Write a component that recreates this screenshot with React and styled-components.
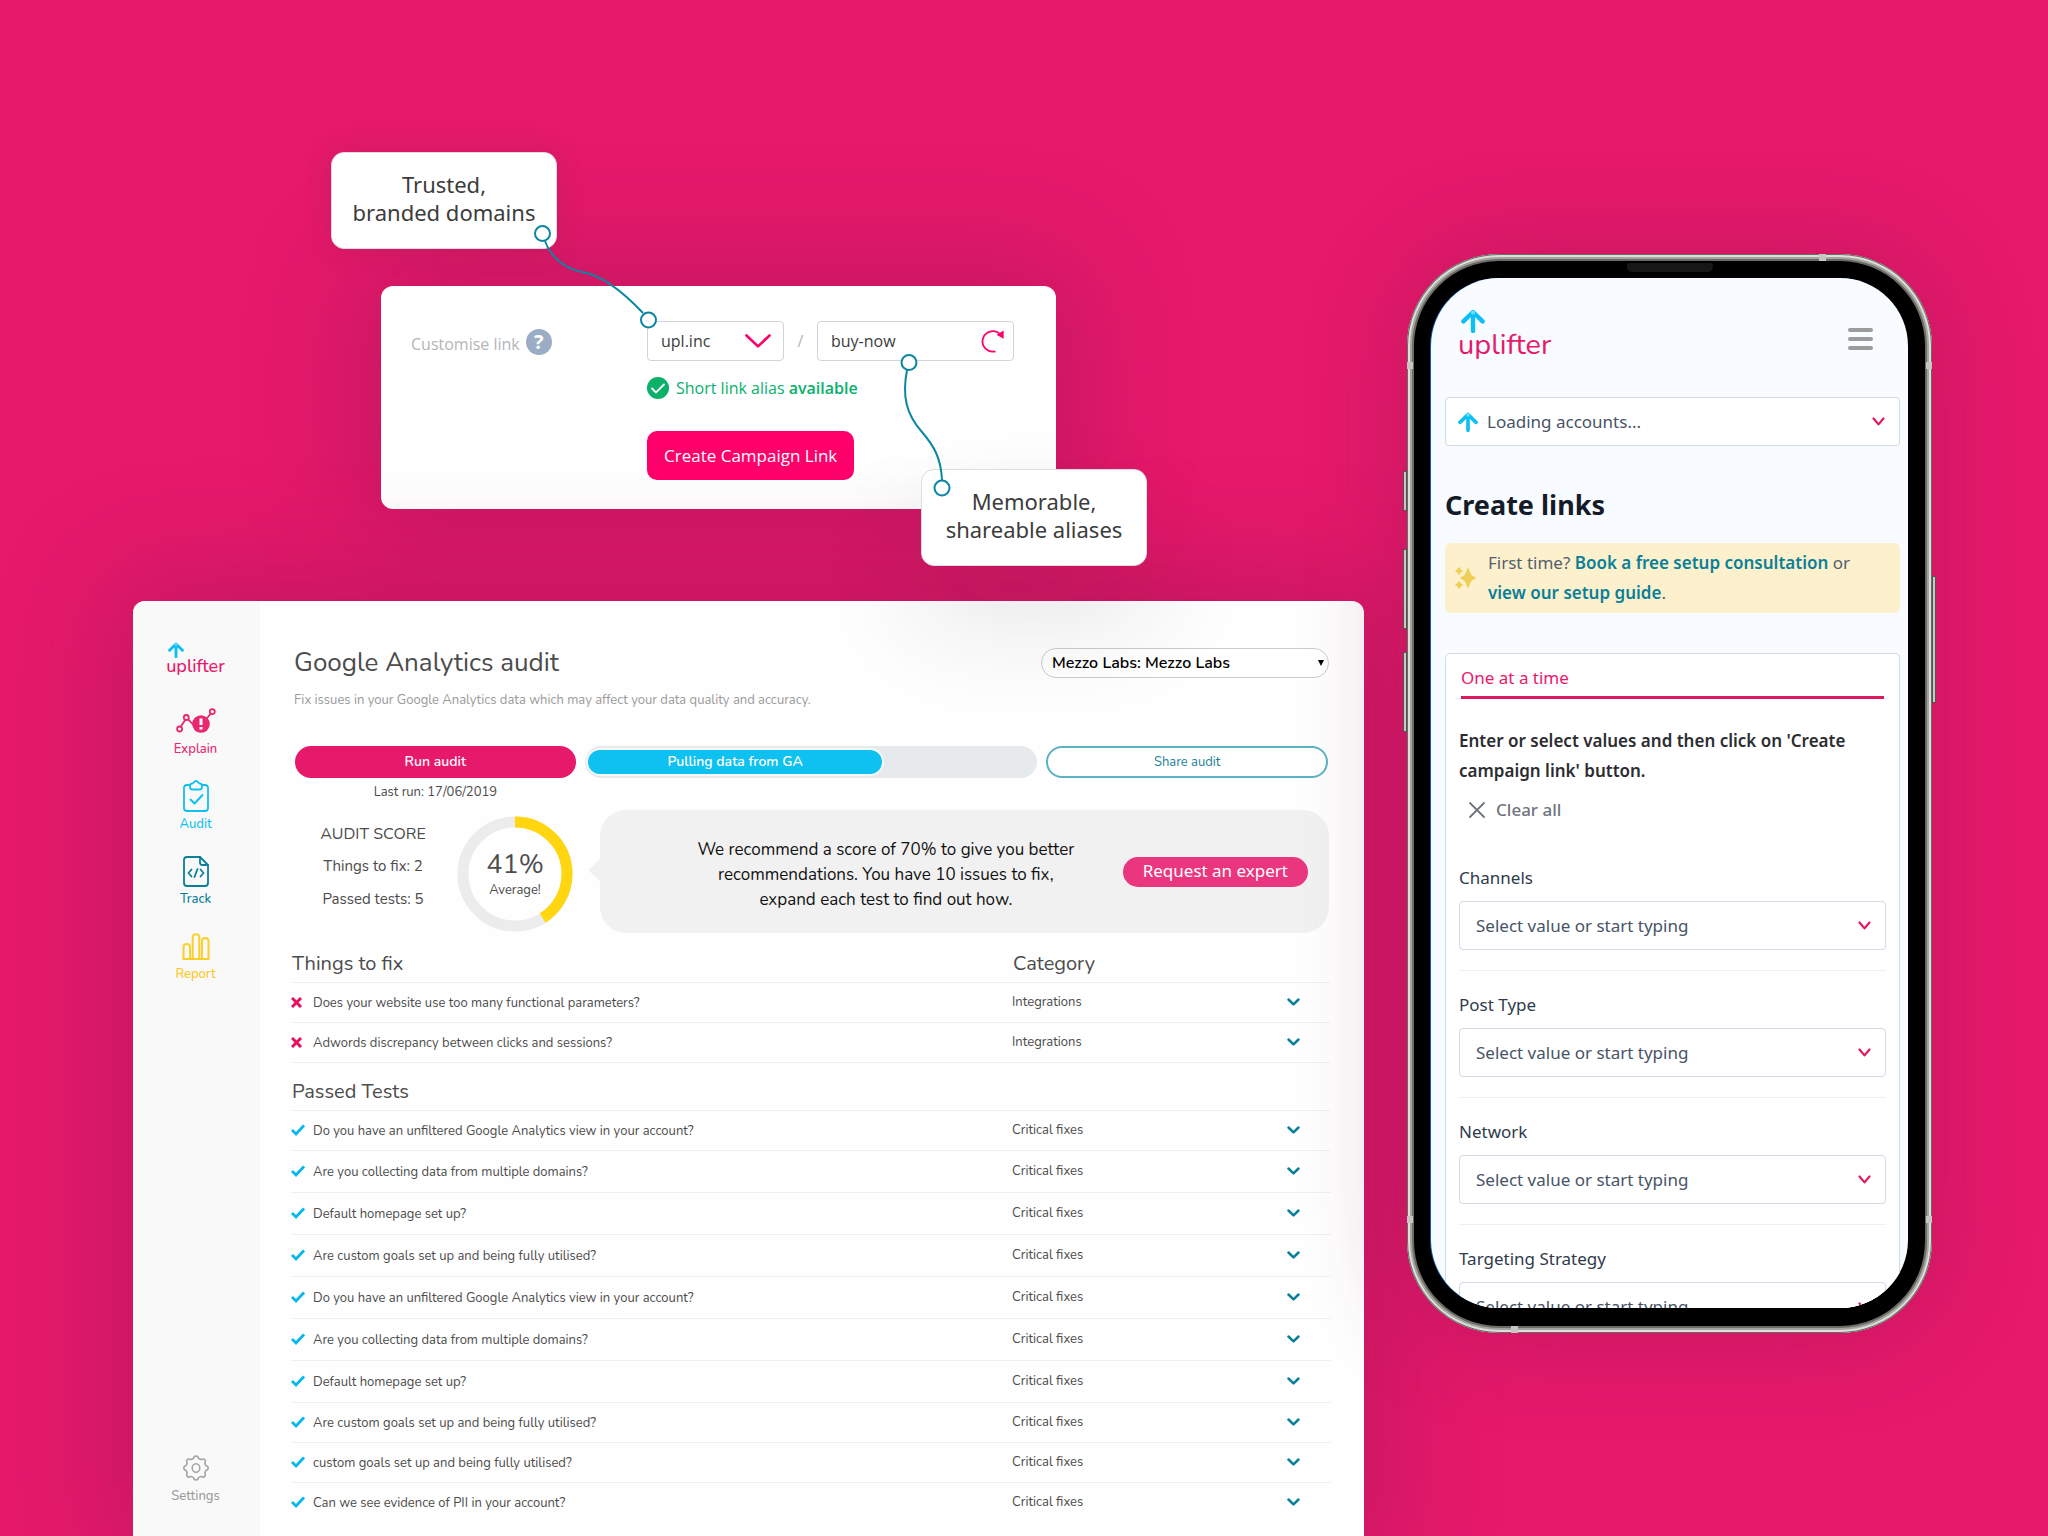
import React from "react";
import styled, { createGlobalStyle } from "styled-components";

const sans = '"Open Sans", "Noto Sans", sans-serif';
const noto = '"Noto Sans", "Open Sans", sans-serif';
const rounded = 'Nunito, Lato, "Open Sans", sans-serif';
const c = {
  pink: "#e6196b",
  hot: "#ff006a",
  cyan: "#0fc1f0",
  teal: "#0a7f98",
  yellow: "#ffd60f",
};

const GlobalStyle = createGlobalStyle`
  *, *::before, *::after { box-sizing: border-box; }
  body { margin: 0; background: ${c.pink}; font-family: ${sans}; }
  button, select, input { font: inherit; margin: 0; }
  h1, h2, p { margin: 0; }
  a { text-decoration: none; color: inherit; }
`;

/* ---------- page ---------- */
const Scene = styled.main`
  display: grid;
  grid-template-columns: minmax(0, 1fr) 525px;
  column-gap: 43px;
  min-height: 100vh;
  padding: 0 116px 0 133px;
  overflow: hidden;
`;
const LeftColumn = styled.div`
  display: flex;
  flex-direction: column;
`;
const ComposerArea = styled.div`
  position: relative;
  padding: 286px 308px 92px 248px;
`;

/* ---------- link composer ---------- */
const Composer = styled.form`
  display: grid;
  grid-template-columns: 236px minmax(0, 1fr);
  padding: 35px 42px 29px 30px;
  border-radius: 12px;
  background: #fff;
  box-shadow: 0 0 110px 20px rgba(125, 20, 75, 0.34);
`;
const ComposerLabel = styled.div`
  display: flex;
  align-items: center;
  gap: 6px;
  height: 42px;
  color: #b3b5b8;
  font-size: 16px;
  line-height: 20px;
  label { padding-top: 3px; }
`;
const Help = styled.button`
  width: 26px;
  height: 26px;
  padding: 0;
  border: 0;
  border-radius: 50%;
  background: #9badc4;
  color: #fff;
  font-size: 20px;
  font-weight: 700;
  line-height: 26px;
`;
const ComposerBody = styled.div`
  display: flex;
  flex-direction: column;
  align-items: flex-start;
`;
const AliasRow = styled.div`
  display: flex;
  align-items: center;
  align-self: stretch;
  color: #b3b5b8;
  font-size: 16px;
`;
const Slash = styled.span`
  width: 33px;
  text-align: center;
`;
const Field = styled.div`
  display: grid;
  align-items: center;
  flex: ${(p) => p.$flex || "none"};
  width: ${(p) => p.$width || "auto"};
  > * { grid-area: 1 / 1; }
  > svg, > button { justify-self: end; margin-right: ${(p) => p.$iconGap}px; }
  > svg { pointer-events: none; }
`;
const boxed = `
  appearance: none;
  width: 100%;
  min-width: 0;
  border: 1px solid #d2d4da;
  border-radius: 4px;
  background: #fff;
  outline: 0;
`;
const SmallSelect = styled.select`
  ${boxed}
  height: 40px;
  padding: 0 13px;
  color: #3c3c3c;
`;
const SmallInput = styled.input`
  ${boxed}
  height: 40px;
  padding: 0 13px;
  color: #3c3c3c;
`;
const IconButton = styled.button`
  display: inline-flex;
  padding: 0;
  border: 0;
  background: none;
  color: inherit;
`;
const Status = styled.p`
  display: flex;
  align-items: center;
  gap: 7px;
  margin: 15px 0 31px;
  color: #06b26b;
  font-size: 16px;
  line-height: 24px;
  strong { font-weight: 600; }
`;
const CreateButton = styled.button`
  height: 49px;
  padding: 0 17px;
  border: 0;
  border-radius: 10px;
  background: ${c.hot};
  color: #fff;
  font-size: 17px;
`;
const Callout = styled.div`
  position: absolute;
  z-index: 1;
  top: ${(p) => p.$top}px;
  left: ${(p) => p.$left}px;
  width: 226px;
  padding: 17px 0 22px;
  border: 1px solid #dcdde3;
  border-radius: 13px;
  background: #fff;
  box-shadow: ${(p) => (p.$raised ? "0 50px 110px 0 rgba(50, 30, 40, 0.12)" : "0 0 30px rgba(70, 40, 60, 0.14)")};
  color: #3c3c3c;
  font-family: ${noto};
  font-size: 22px;
  line-height: 28px;
  text-align: center;
`;
const Connectors = styled.svg`
  position: absolute;
  z-index: 2;
  top: 220px;
  left: 400px;
  pointer-events: none;
`;

/* ---------- audit window ---------- */
const Window = styled.section`
  position: relative;
  display: grid;
  grid-template-columns: 127px minmax(0, 1fr);
  flex: 1;
  border-radius: 12px 12px 0 0;
  background: #fefefe;
  box-shadow: 0 0 110px 20px rgba(125, 20, 75, 0.34);
  font-family: ${rounded};
  color: #4c4c4c;
  overflow: hidden;
`;
const Sidebar = styled.aside`
  display: flex;
  flex-direction: column;
  align-items: center;
  padding: 41px 2px 37px 0;
  background: #f9f9f9;
`;
const Logo = styled.a`
  display: flex;
  flex-direction: column;
  align-items: flex-start;
  color: ${c.pink};
  font-family: ${rounded};
  font-size: ${(p) => p.$size}px;
  font-weight: ${(p) => p.$weight};
  line-height: ${(p) => p.$line}px;
  svg { margin-left: 2px; }
`;
const Nav = styled.nav`
  display: flex;
  flex-direction: column;
  gap: 21px;
  margin-top: 31px;
`;
const NavItem = styled.a`
  display: flex;
  flex-direction: column;
  align-items: center;
  gap: 2px;
  margin-top: ${(p) => (p.$last ? "auto" : 0)};
  color: ${(p) => p.$color};
  font-size: 13px;
  font-weight: 500;
  line-height: 20px;
`;
const IconBox = styled.span`
  display: flex;
  align-items: center;
  justify-content: center;
  height: 32px;
`;
const Content = styled.div`
  padding: 47px 33px 20px 31px;
`;
const Inset = styled.div`
  padding: 0 2px 0 3px;
`;
const Header = styled.header`
  display: flex;
  align-items: center;
  justify-content: space-between;
  height: 30px;
`;
const Title = styled.h1`
  font-size: 26px;
  font-weight: 400;
  line-height: 30px;
`;
const AccountSelect = styled.select`
  appearance: none;
  width: 288px;
  height: 30px;
  padding: 0 10px;
  border: 1px solid #ccc;
  border-radius: 15px;
  background: #fff;
  color: #000;
  font-size: 16px;
  font-weight: 600;
`;
const Subtitle = styled.p`
  margin-top: 12px;
  color: #9a9a9a;
  font-size: 13px;
  line-height: 20px;
`;
const Actions = styled.div`
  display: grid;
  grid-template-columns: 281fr 453fr 282fr;
  column-gap: 9px;
  margin-top: 36px;
  padding: 0 1px;
  font-size: 14px;
  line-height: 20px;
`;
const RunButton = styled.button`
  width: 100%;
  height: 32px;
  border: 0;
  border-radius: 16px;
  background: ${c.pink};
  color: #fff;
  font-weight: 600;
`;
const LastRun = styled.p`
  margin-top: 4px;
  font-size: 13px;
  text-align: center;
`;
const Progress = styled.div`
  height: 32px;
  padding: 4px 3px;
  border-radius: 16px;
  background: #e6eaed;
`;
const ProgressFill = styled.div`
  height: 24px;
  border-radius: 12px;
  background: ${c.cyan};
  box-shadow: 0 0 0 2px #f6f7f9;
  color: #fff;
  font-weight: 600;
  line-height: 23px;
  text-align: center;
`;
const ShareButton = styled.button`
  height: 32px;
  border: 2px solid #5cb3c3;
  border-radius: 16px;
  background: #fff;
  color: #1b8199;
  font-size: 13px;
`;
const Summary = styled.div`
  display: flex;
  align-items: flex-start;
  margin-top: 8px;
  padding-left: 1px;
`;
const Score = styled.div`
  width: 156px;
  padding-top: 8px;
  font-size: 15px;
  line-height: 33px;
  text-align: center;
`;
const ScoreTitle = styled.h2`
  font-size: 16px;
  font-weight: 400;
  line-height: 32px;
`;
const Ring = styled.div`
  display: grid;
  width: 116px;
  height: 116px;
  margin: 6px 27px 0 6px;
  > * { grid-area: 1 / 1; }
`;
const RingText = styled.div`
  display: flex;
  flex-direction: column;
  align-items: center;
  padding-top: 34px;
  font-size: 13px;
  line-height: 20px;
  strong {
    font-size: 27px;
    font-weight: 400;
    line-height: 30px;
  }
`;
const Bubble = styled.div`
  position: relative;
  display: flex;
  flex: 1;
  align-items: center;
  gap: 20px;
  min-height: 123px;
  padding: 0 21px 0 69px;
  border-radius: 26px;
  background: #f1f1f1;
  color: #111;
  font-size: 17px;
  line-height: 25px;
  text-align: center;
  p { flex: 1; padding-top: 6px; }
  &::before {
    content: "";
    position: absolute;
    left: -12px;
    top: 49px;
    border: solid transparent;
    border-width: 11px 12px 11px 0;
    border-right-color: #f1f1f1;
  }
`;
const ExpertButton = styled.button`
  height: 30px;
  padding: 0 20px 2px;
  border: 0;
  border-radius: 15px;
  background: #ea367e;
  color: #fff;
  font-family: ${noto};
  font-size: 17px;
  line-height: 28px;
`;
const Tests = styled.table`
  width: 100%;
  margin-top: 13px;
  border-collapse: collapse;
  table-layout: fixed;
  font-size: 13px;
  td, th {
    padding: 0;
    border-bottom: 1px solid #f0f0f0;
    text-align: left;
  }
  td:nth-child(2) { padding-top: 2px; }
  td svg { display: block; }
`;
const GroupRow = styled.tr`
  height: ${(p) => p.$height}px;
  th {
    padding: 0 0 6px 1px;
    font-size: 20px;
    font-weight: 400;
    line-height: 24px;
    vertical-align: bottom;
  }
`;
const TestRow = styled.tr`
  height: ${(p) => (p.$tall ? 42 : 40)}px;
  &:last-child td { border-bottom-color: ${(p) => (p.$end ? "transparent" : "#f0f0f0")}; }
`;

/* ---------- phone ---------- */
const Phone = styled.section`
  position: relative;
  align-self: start;
  height: 1079px;
  margin-top: 254px;
  padding: 24px 24px 25px;
  border-radius: 92px;
  background: #000;
  box-shadow:
    inset 0 0 0 1px #6b6b66,
    inset 0 0 0 3px #dededa,
    inset 0 0 0 5px #a5a59f,
    inset 0 0 0 7px #6c6c66,
    0 0 90px 10px rgba(125, 20, 75, 0.28);
`;
const SideKey = styled.span`
  position: absolute;
  top: ${(p) => p.$top}px;
  ${(p) => p.$side}: -4px;
  width: 4px;
  height: ${(p) => p.$height}px;
  border: 1px solid #55534f;
  background: #c9c8c2;
`;
const Band = styled.span`
  position: absolute;
  width: ${(p) => (p.$flat ? 7 : 6)}px;
  height: 7px;
  background: #c6c7c2;
  ${(p) => p.$at}
`;
const Speaker = styled.span`
  position: absolute;
  top: 9px;
  left: 220px;
  width: 86px;
  height: 9px;
  border-radius: 2px 2px 5px 5px;
  background: #171717;
`;
const Screen = styled.div`
  height: 100%;
  padding: 31px 8px 0 14px;
  border-radius: 68px;
  background: #f8fbff;
  box-shadow: -1px 0 0 #0a5aa0;
  overflow: hidden;
  color: #2f3a4b;
  font-family: ${noto};
  font-size: 17px;
`;
const PhoneHeader = styled.header`
  display: flex;
  align-items: center;
  justify-content: space-between;
  padding: 0 27px 0 13px;
  a svg { margin-left: 3px; }
`;
const Menu = styled.button`
  display: flex;
  flex-direction: column;
  gap: 5px;
  margin-top: 12px;
  padding: 0;
  border: 0;
  background: none;
  span {
    width: 25px;
    height: 4px;
    border-radius: 2px;
    background: #9b9b9b;
  }
`;
const AccountField = styled(Field)`
  margin-top: 40px;
  > svg:first-of-type { justify-self: start; margin-left: 13px; z-index: 1; }
`;
const PhoneSelect = styled.select`
  ${boxed}
  height: 49px;
  padding: 0 40px 0 ${(p) => p.$pad}px;
  border-color: #d2dae4;
  color: #475467;
`;
const PhoneTitle = styled.h2`
  margin: 41px 0 20px;
  color: #151c28;
  font-size: 27px;
  font-weight: 700;
  line-height: 36px;
`;
const Notice = styled.div`
  display: flex;
  align-items: center;
  gap: 12px;
  padding: 5px 10px;
  border-radius: 5px;
  background: #fdf1cd;
  color: #55606f;
  line-height: 30px;
  svg { flex: none; }
  a { color: ${c.teal}; font-weight: 600; }
`;
const FormCard = styled.form`
  margin-top: 40px;
  padding: 12px 13px;
  border: 1px solid #d2dae4;
  border-radius: 5px;
  background: #fff;
`;
const Tab = styled.button`
  display: block;
  width: calc(100% - 4px);
  margin: 0 2px;
  padding: 0 0 6px;
  border: 0;
  border-bottom: 3px solid #e0185f;
  background: none;
  color: #e8196b;
  line-height: 24px;
  text-align: left;
`;
const Lead = styled.p`
  margin: 27px 0 12px;
  color: #2b2d31;
  font-weight: 600;
  line-height: 30px;
`;
const Clear = styled.button`
  display: flex;
  align-items: center;
  gap: 11px;
  margin-bottom: 44px;
  padding: 0 10px;
  border: 0;
  background: none;
  color: #6f757e;
  font-weight: 500;
  line-height: 24px;
`;
const Group = styled.div`
  margin-bottom: 22px;
  padding-bottom: 20px;
  border-bottom: 1px solid #edf1f6;
  label {
    display: block;
    margin-bottom: 11px;
    line-height: 24px;
  }
`;

/* ---------- drawings ---------- */
const Arrow = ({ size }) => (
  <svg width={size} height={size} viewBox="0 0 24 24" fill="none" stroke="#0cc0f5" strokeWidth="4.4" strokeLinecap="round" strokeLinejoin="round">
    <path d="M12 3.5V22M2.4 12.4 12 3l9.6 9.4" />
    <circle cx="12" cy="3.6" r="1" stroke="#6fdcf9" strokeWidth="2" />
  </svg>
);
const Chevron = ({ w = 13, h = 8, color = c.teal, stroke = 2.5 }) => (
  <svg width={w} height={h} viewBox={`0 0 ${w} ${h}`} fill="none" stroke={color} strokeWidth={stroke} strokeLinecap="round" strokeLinejoin="round">
    <path d={`M1.5 1.5 ${w / 2} ${h - 1.6} ${w - 1.5} 1.5`} />
  </svg>
);
const Cross = () => (
  <svg width="11" height="11" viewBox="0 0 11 11" stroke="#e6105f" strokeWidth="3">
    <path d="M1 1l9 9M10 1l-9 9" />
  </svg>
);
const Tick = () => (
  <svg width="14" height="12" viewBox="0 0 14 12" fill="none" stroke="#07b7ee" strokeWidth="2.8">
    <path d="M1 6l4 4 8-8.6" />
  </svg>
);
const ExplainIcon = () => (
  <svg width="40" height="26" viewBox="0 0 40 26" fill="none" stroke="#e8286f" strokeWidth="1.8">
    <circle cx="3.6" cy="21" r="2.5" />
    <circle cx="10.3" cy="9.5" r="2.5" />
    <circle cx="36.3" cy="3.6" r="2.5" />
    <path d="M4.9 18.6 9.1 11.9M12.2 11.3 17.5 17M34.6 5.7 30 11.5" />
    <circle cx="25" cy="16" r="8.8" fill="#e8286f" stroke="none" />
    <path d="M25 10.5v6.5M25 19v2.5" stroke="#fff" strokeWidth="3" />
  </svg>
);
const AuditIcon = () => (
  <svg width="26" height="32" viewBox="0 0 26 32" fill="none" stroke={c.cyan} strokeWidth="1.8" strokeLinecap="round" strokeLinejoin="round">
    <path d="M7 5H4a3 3 0 0 0-3 3v20a3 3 0 0 0 3 3h18a3 3 0 0 0 3-3V8a3 3 0 0 0-3-3h-3" />
    <path d="M7 5.5c0-1.5 1-2 2.5-2C10.5 3.5 11 1 13 1s2.5 2.5 3.5 2.5c1.5 0 2.5.5 2.5 2V7c0 1.5-1 2.5-2.5 2.5h-7C8 9.5 7 8.5 7 7z" />
    <path d="M7.5 19.5l4 4 8-8.500" strokeWidth="2" />
  </svg>
);
const TrackIcon = () => (
  <svg width="26" height="31" viewBox="0 0 26 31" fill="none" stroke={c.teal} strokeWidth="1.8" strokeLinecap="round" strokeLinejoin="round">
    <path d="M17 1H4a3 3 0 0 0-3 3v23a3 3 0 0 0 3 3h18a3 3 0 0 0 3-3V9z" />
    <path d="M17 1v5.5A2.5 2.5 0 0 0 19.5 9H25" />
    <path d="M8.5 13.5 5.5 17l3 3.5M17.5 13.5l3 3.5-3 3.5M14.5 13l-3 8" />
  </svg>
);
const ReportIcon = () => (
  <svg width="28" height="27" viewBox="0 0 28 27" fill="none" stroke="#fbd02c" strokeWidth="2">
    <path d="M1.5 26V14c0-4 6.5-4 6.5 0v12zM10.7 26V4.5c0-4.5 6.6-4.5 6.6 0V26zM20 26V8c0-4 6.5-4 6.5 0v18zM1 26h26" />
  </svg>
);
const GearIcon = () => (
  <svg width="26" height="26" viewBox="0 0 26 26" fill="none" stroke="#a3a3a3" strokeWidth="1.5" strokeLinejoin="round">
    <path d="M13 1c1.700 0 2.300.6 2.600 2.600 1.200.3 1.800.6 2.600 1.100 1.600-1.200 2.400-1.200 3.500-.1s1.200 1.900 0 3.500c.5.9.8 1.500 1 2.300 2 .4 2.500 1 2.500 2.600s-.5 2.200-2.500 2.600c-.2.900-.5 1.500-1 2.300 1.200 1.600 1.100 2.400 0 3.500s-1.900 1.100-3.500 0c-.8.500-1.400.7-2.600 1-.3 2-.9 2.600-2.600 2.600s-2.300-.6-2.600-2.600c-1.200-.3-1.800-.5-2.600-1-1.600 1.100-2.400 1.100-3.500 0s-1.200-1.900 0-3.500c-.5-.8-.8-1.400-1-2.300C1.300 15.200.8 14.600.8 13s.5-2.200 2.500-2.600c.2-.8.5-1.400 1-2.300-1.200-1.600-1.100-2.400 0-3.500s1.900-1.100 3.500.1c.8-.5 1.400-.8 2.600-1.100C10.700 1.600 11.300 1 13 1z" />
    <ellipse cx="13" cy="13" rx="3.8" ry="4.3" />
  </svg>
);
const Sparkles = () => (
  <svg width="21" height="22" viewBox="0 0 21 22" fill="#efcf55" stroke="#efcf55" strokeWidth="1.6" strokeLinejoin="round">
    <path d="M13 2c1.700 5.500 2.600 7.300 7 9-4.400 1.700-5.300 3.500-7 9-1.700-5.500-2.600-7.300-7-9 4.400-1.700 5.300-3.500 7-9z" />
    <path d="M4 1c.6 2.200 1 2.500 3 3-2 .5-2.400.8-3 3-.6-2.200-1-2.500-3-3 2-.5 2.400-.8 3-3zM4 15c.6 2.200 1 2.500 3 3-2 .5-2.400.8-3 3-.6-2.200-1-2.500-3-3 2-.5 2.400-.8 3-3z" />
  </svg>
);

const navItems = [
  { name: "Explain", color: "#e8286f", Icon: ExplainIcon },
  { name: "Audit", color: c.cyan, Icon: AuditIcon },
  { name: "Track", color: c.teal, Icon: TrackIcon },
  { name: "Report", color: "#fbc81c", Icon: ReportIcon },
];
const toFix = [
  "Does your website use too many functional parameters?",
  "Adwords discrepancy between clicks and sessions?",
];
const passed = [
  ["Do you have an unfiltered Google Analytics view in your account?", false],
  ["Are you collecting data from multiple domains?", true],
  ["Default homepage set up?", true],
  ["Are custom goals set up and being fully utilised?", true],
  ["Do you have an unfiltered Google Analytics view in your account?", true],
  ["Are you collecting data from multiple domains?", true],
  ["Default homepage set up?", true],
  ["Are custom goals set up and being fully utilised?", false],
  ["custom goals set up and being fully utilised?", false],
  ["Can we see evidence of PII in your account?", false],
];
const groups = ["Channels", "Post Type", "Network", "Targeting Strategy"];

function Test({ icon, text, category, tall, end }) {
  return (
    <TestRow $tall={tall} $end={end}>
      <td>{icon}</td>
      <td>{text}</td>
      <td>{category}</td>
      <td>
        <IconButton type="button" aria-label="Expand test"><Chevron /></IconButton>
      </td>
    </TestRow>
  );
}

function LinkComposer() {
  return (
    <ComposerArea>
      <Composer>
        <ComposerLabel>
          <label htmlFor="alias">Customise link</label>
          <Help type="button">?</Help>
        </ComposerLabel>
        <ComposerBody>
          <AliasRow>
            <Field $width="137px" $iconGap={13}>
              <SmallSelect aria-label="Domain"><option>upl.inc</option></SmallSelect>
              <Chevron w={26} h={14} color={c.hot} stroke={2.6} />
            </Field>
            <Slash>/</Slash>
            <Field $flex="1" $iconGap={10}>
              <SmallInput id="alias" defaultValue="buy-now" />
              <IconButton type="button" aria-label="New alias">
                <svg width="23" height="24" viewBox="0 0 23 24" fill="none" stroke={c.hot} strokeWidth="1.8">
                  <path d="M14.5 22.3A10.3 10.3 0 1 1 19.5 5.5" />
                  <path d="M22.6 1.5v8.2L15.5 5.8z" fill={c.hot} stroke="none" />
                </svg>
              </IconButton>
            </Field>
          </AliasRow>
          <Status>
            <svg width="22" height="22" viewBox="0 0 22 22">
              <circle cx="11" cy="11" r="11" fill="#0bb069" />
              <path d="M5 11.5l4 4 8-8" fill="none" stroke="#fff" strokeWidth="1.8" strokeLinecap="round" />
            </svg>
            <span>Short link alias <strong>available</strong></span>
          </Status>
          <CreateButton type="button">Create Campaign Link</CreateButton>
        </ComposerBody>
      </Composer>
      <Callout $top={152} $left={198}>Trusted,<br />branded domains</Callout>
      <Callout $top={469} $left={788} $raised>Memorable,<br />shareable aliases</Callout>
      <Connectors width="430" height="290" viewBox="533 220 430 290" fill="none" stroke="#0a86a3" strokeWidth="2">
        <path d="M545 241C551 258 566 269 582 272C602 275 625 294 643 313" />
        <path d="M907 370C902 396 906 414 922 432C934 446 941 458 942 480" />
        <g fill="#fff">
          <circle cx="542.5" cy="233.5" r="7.5" />
          <circle cx="648.5" cy="320" r="7.5" />
          <circle cx="909" cy="362.5" r="7.5" />
          <circle cx="942" cy="488" r="7.5" />
        </g>
      </Connectors>
    </ComposerArea>
  );
}

function AuditWindow() {
  const radius = 52;
  const length = 2 * Math.PI * radius;
  return (
    <Window>
      <Sidebar>
        <Logo href="#" $size={18} $line={16} $weight={500}><Arrow size={16} />uplifter</Logo>
        <Nav>
          {navItems.map(({ name, color, Icon }) => (
            <NavItem key={name} href="#" $color={color}><IconBox><Icon /></IconBox>{name}</NavItem>
          ))}
        </Nav>
        <NavItem href="#" $color="#9b9b9b" $last><IconBox><GearIcon /></IconBox>Settings</NavItem>
      </Sidebar>
      <Content>
        <Inset>
          <Header>
            <Title>Google Analytics audit</Title>
            <Field $iconGap={5}>
              <AccountSelect aria-label="Account"><option>Mezzo Labs: Mezzo Labs</option></AccountSelect>
              <svg width="6" height="6" viewBox="0 0 6 6"><path d="M0 0h6L3 6z" fill="#000" /></svg>
            </Field>
          </Header>
          <Subtitle>Fix issues in your Google Analytics data which may affect your data quality and accuracy.</Subtitle>
          <Actions>
            <div>
              <RunButton type="button">Run audit</RunButton>
              <LastRun>Last run: 17/06/2019</LastRun>
            </div>
            <Progress><ProgressFill style={{ width: "66%" }}>Pulling data from GA</ProgressFill></Progress>
            <ShareButton type="button">Share audit</ShareButton>
          </Actions>
          <Summary>
            <Score>
              <ScoreTitle>AUDIT SCORE</ScoreTitle>
              <p>Things to fix: 2</p>
              <p>Passed tests: 5</p>
            </Score>
            <Ring>
              <svg width="116" height="116" viewBox="0 0 116 116" fill="none" strokeWidth="11">
                <circle cx="58" cy="58" r={radius} stroke="#ececec" />
                <circle cx="58" cy="58" r={radius} stroke={c.yellow} strokeDasharray={`${length * 0.41} ${length}`} transform="rotate(-90 58 58)" />
              </svg>
              <RingText><strong>41%</strong>Average!</RingText>
            </Ring>
            <Bubble>
              <p>We recommend a score of 70% to give you better<br />recommendations. You have 10 issues to fix,<br />expand each test to find out how.</p>
              <ExpertButton type="button">Request an expert</ExpertButton>
            </Bubble>
          </Summary>
        </Inset>
        <Tests>
          <colgroup>
            <col style={{ width: 22 }} /><col /><col style={{ width: 275 }} /><col style={{ width: 44 }} />
          </colgroup>
          <tbody>
            <GroupRow $height={36}><th colSpan={2}>Things to fix</th><th colSpan={2}>Category</th></GroupRow>
            {toFix.map((t) => <Test key={t} icon={<Cross />} text={t} category="Integrations" />)}
          </tbody>
          <tbody>
            <GroupRow $height={48}><th colSpan={4}>Passed Tests</th></GroupRow>
            {passed.map(([t, tall], i) => (
              <Test key={i} icon={<Tick />} text={t} category="Critical fixes" tall={tall} end={i === passed.length - 1} />
            ))}
          </tbody>
        </Tests>
      </Content>
    </Window>
  );
}

function PhonePreview() {
  return (
    <Phone>
      <SideKey $side="left" $top={217} $height={40} />
      <SideKey $side="left" $top={295} $height={80} />
      <SideKey $side="left" $top={398} $height={80} />
      <SideKey $side="right" $top={322} $height={127} />
      <Band $at="left: 0; top: 108px;" />
      <Band $at="right: 0; top: 108px;" />
      <Band $at="left: 0; bottom: 110px;" />
      <Band $at="right: 0; bottom: 110px;" />
      <Band $flat $at="right: 106px; top: 0;" />
      <Band $flat $at="left: 104px; bottom: 0;" />
      <Speaker />
      <Screen>
        <PhoneHeader>
          <Logo href="#" $size={29} $line={24} $weight={400}><Arrow size={24} />uplifter</Logo>
          <Menu type="button" aria-label="Menu"><span /><span /><span /></Menu>
        </PhoneHeader>
        <AccountField $iconGap={15}>
          <Arrow size={20} />
          <PhoneSelect $pad={41} aria-label="Account"><option>Loading accounts...</option></PhoneSelect>
          <Chevron w={13} h={9} color="#e0185f" stroke={2.2} />
        </AccountField>
        <PhoneTitle>Create links</PhoneTitle>
        <Notice>
          <Sparkles />
          <p>First time? <a href="#">Book a free setup consultation</a> or <a href="#">view our setup guide</a>.</p>
        </Notice>
        <FormCard>
          <Tab type="button">One at a time</Tab>
          <Lead>Enter or select values and then click on 'Create campaign link' button.</Lead>
          <Clear type="button">
            <svg width="16" height="16" viewBox="0 0 16 16" stroke="#6f757e" strokeWidth="1.8" strokeLinecap="round"><path d="M1 1l14 14M15 1 1 15" /></svg>
            Clear all
          </Clear>
          {groups.map((g) => (
            <Group key={g}>
              <label htmlFor={g}>{g}</label>
              <Field $iconGap={15}>
                <PhoneSelect id={g} $pad={16}><option>Select value or start typing</option></PhoneSelect>
                <Chevron w={13} h={9} color="#e0185f" stroke={2.2} />
              </Field>
            </Group>
          ))}
        </FormCard>
      </Screen>
    </Phone>
  );
}

export default function App() {
  return (
    <>
      <GlobalStyle />
      <Scene>
        <LeftColumn>
          <LinkComposer />
          <AuditWindow />
        </LeftColumn>
        <PhonePreview />
      </Scene>
    </>
  );
}
